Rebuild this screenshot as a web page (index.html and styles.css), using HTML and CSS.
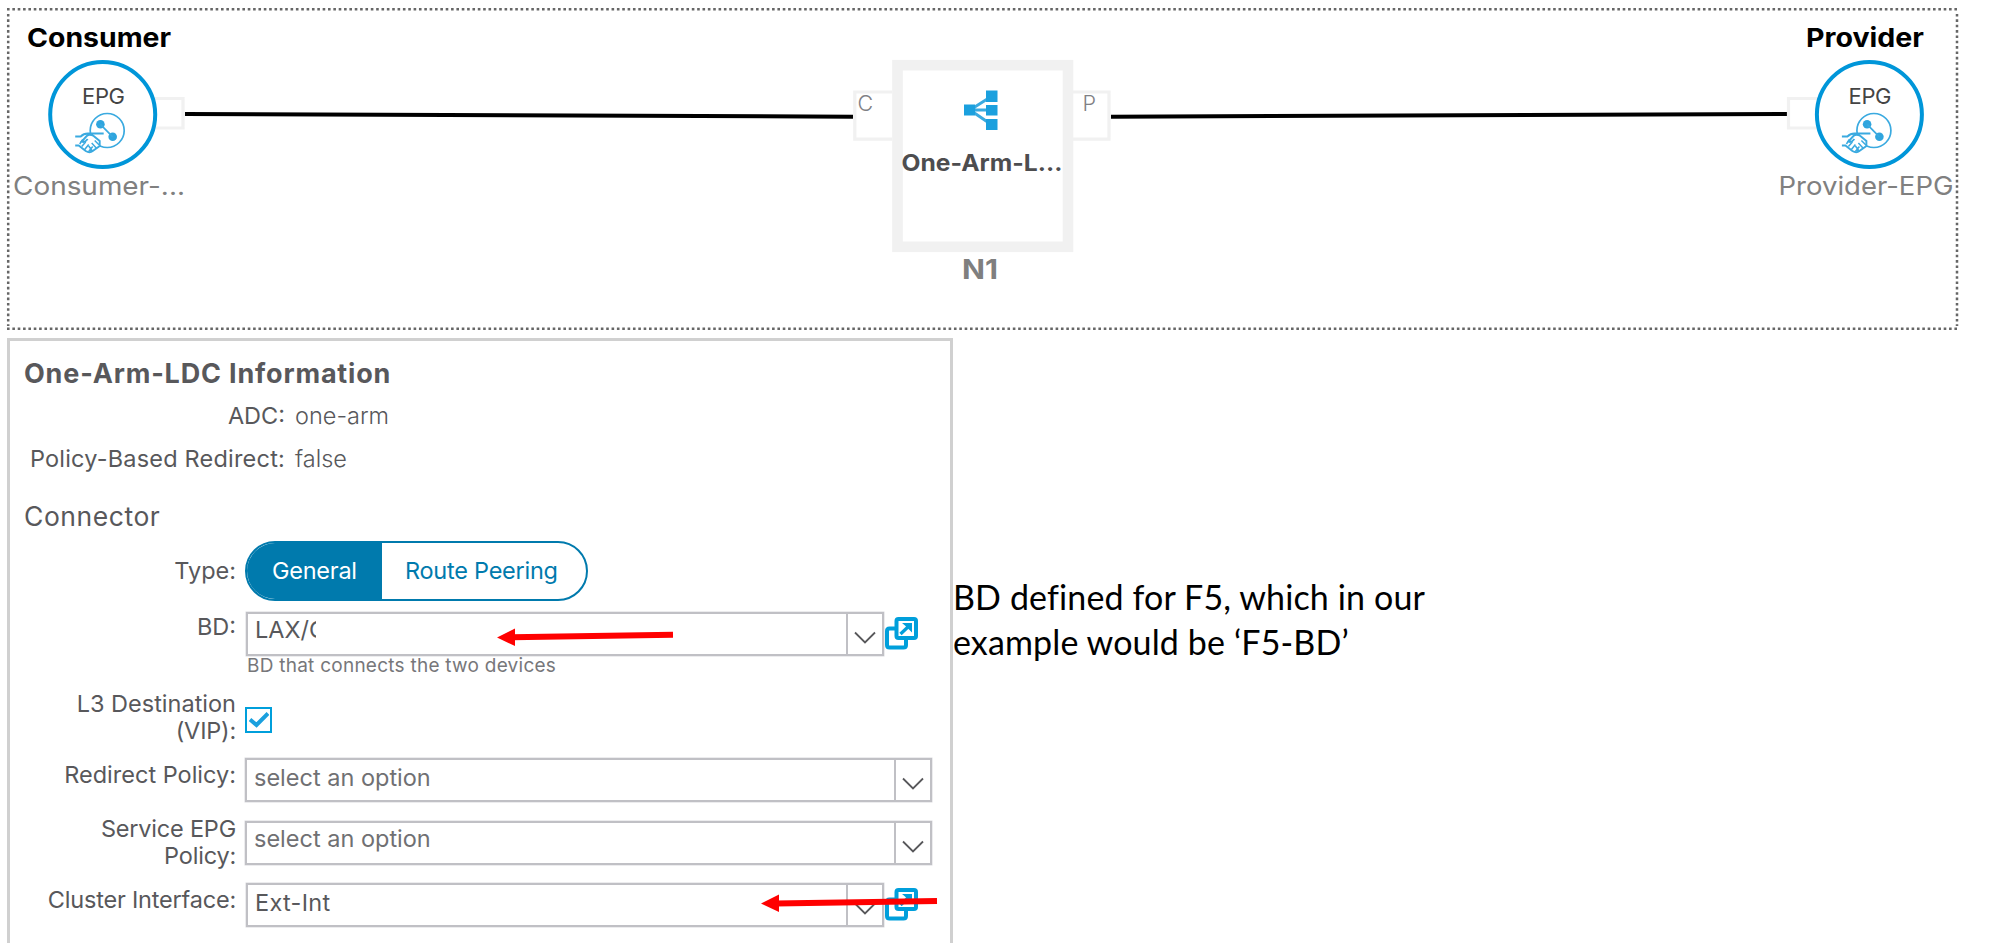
FILE: index.html
```html
<!DOCTYPE html>
<html lang="en">
<head>
<meta charset="utf-8">
<title>Service Graph</title>
<link rel="stylesheet" href="styles.css">
</head>
<body>
<svg class="graph" width="2000" height="338" viewBox="0 0 2000 338">
  <defs>
    <g id="epg">
      <circle class="ring" r="52.5"/>
      <g class="glyph">
        <circle class="thin" cx="4.5" cy="16" r="17"/>
        <circle class="solid" cx="-2.3" cy="9.8" r="4.3"/>
        <circle class="solid" cx="10" cy="22.3" r="4.3"/>
        <path class="thin" d="M-2.3 9.8 10 22.3"/>
        <path class="palm" d="M-22 23-24 30-14 38-3 33V26L-8 20z"/>
        <path class="hand" d="M-27.500 22h5.500q3-3 7-3H1M-27.500 31h3.500l7 5.500q4 2.500 7 0l7-5 0-5-6-5q-4-2.500-7 0l-5 5.500q3 1.500 6-2.500"/>
        <path class="hand-lines" d="M-20 25l-3 4.500M-18 35l4-5M-14 37l4-5M-10 37l-4-5.500M-6 34l-5-5.500M-3 31l-5-5M-21 32l4-4.500"/>
      </g>
    </g>
  </defs>
  <path class="dots" d="M7 9.2H1958M7 328.7H1958M8.2 14V326M1957 14V326"/>
  <path class="wire" d="M185 114 853 116.7M1111 116.7 1787 114"/>
  <path class="port" d="M150 98.5h33v29.5h-33M1821 98.5h-32.5v29.5H1821"/>
  <use href="#epg" x="102.7" y="114.5"/>
  <use href="#epg" x="1869.4" y="114.5"/>
  <text class="title" x="27" y="46.5" textLength="144" lengthAdjust="spacingAndGlyphs">Consumer</text>
  <text class="title" x="1806" y="46.5" textLength="118" lengthAdjust="spacingAndGlyphs">Provider</text>
  <text class="epg" x="82" y="104" textLength="43">EPG</text>
  <text class="epg" x="1848.5" y="104" textLength="43">EPG</text>
  <text class="name" x="13" y="195" textLength="172" lengthAdjust="spacingAndGlyphs">Consumer-...</text>
  <text class="name" x="1778.500" y="195" textLength="175" lengthAdjust="spacingAndGlyphs">Provider-EPG</text>
  <path class="port wide" d="M892 92h-37.2v47.2H892M1073 92h36v47.2h-36"/>
  <rect class="node" x="897.5" y="65.2" width="170.5" height="181.6"/>
  <path class="lb-line" d="M992 96 970 110 992 125M970 110h22"/>
  <path class="lb" d="M964 104.5h11v11h-11zM986 90.5h11.5v11.5H986zM986 105h11.5v10.5H986zM986 119h11.5v11H986z"/>
  <text class="port-name" x="857.500" y="111">C</text>
  <text class="port-name" x="1082.500" y="111">P</text>
  <text class="node-name" x="901.5" y="171" textLength="161" lengthAdjust="spacingAndGlyphs">One-Arm-L...</text>
  <text class="node-id" x="962" y="279" textLength="36" lengthAdjust="spacingAndGlyphs">N1</text>
</svg>

<div class="lower">
  <section class="panel">
    <h2 class="heading">One-Arm-LDC Information</h2>
    <div class="row info"><span class="label">ADC:</span><span class="text">one-arm</span></div>
    <div class="row info second"><span class="label loose">Policy-Based Redirect:</span><span class="text">false</span></div>
    <h3 class="subheading">Connector</h3>
    <div class="row type">
      <span class="label">Type:</span>
      <div class="toggle"><div class="on">General</div><div class="off">Route Peering</div></div>
    </div>
    <div class="row bd">
      <span class="label">BD:</span>
      <div class="control">
        <div class="line">
          <div class="select narrow"><div class="value"><span class="cut">LAX/C</span></div><div class="drop"><svg width="22" height="14"><path d="M1 1.5 11 11.5 21 1.5"/></svg></div></div>
          <svg class="open" width="33" height="33" viewBox="0 0 33 33"><path class="o-frame" d="M10 11.500H4.500Q2 11.500 2 14v14q0 2.500 2.500 2.500h14q2.500 0 2.500-2.500v-6"/><rect class="o-frame" x="11.500" y="2" width="19.500" height="19" rx="2"/><path class="o-arrow" d="M15.500 17 24 9"/><path class="o-head" d="M17 6H27v9.500L24.500 13 20 8.500z"/></svg>
        </div>
        <div class="hint">BD that connects the two devices</div>
      </div>
    </div>
    <div class="row vip">
      <span class="label">L3 Destination<br><span class="tight">(VIP):</span></span>
      <div class="check"><svg width="20" height="16"><path d="M1 7.500 7.500 13 19 1.500"/></svg></div>
    </div>
    <div class="row redirect">
      <span class="label">Redirect Policy:</span>
      <div class="select"><div class="value hollow">select an option</div><div class="drop"><svg width="22" height="14"><path d="M1 1.500 11 11.500 21 1.500"/></svg></div></div>
    </div>
    <div class="row service">
      <span class="label tight">Service EPG<br>Policy:</span>
      <div class="select"><div class="value hollow">select an option</div><div class="drop"><svg width="22" height="14"><path d="M1 1.500 11 11.500 21 1.500"/></svg></div></div>
    </div>
    <div class="row cluster">
      <span class="label tight">Cluster Interface:</span>
      <div class="line">
        <div class="select narrow"><div class="value ext">Ext-Int</div><div class="drop"><svg width="22" height="14"><path d="M1 1.500 11 11.500 21 1.500"/></svg></div></div>
        <svg class="open" width="33" height="33" viewBox="0 0 33 33"><path class="o-frame" d="M10 11.500H4.500Q2 11.500 2 14v14q0 2.500 2.500 2.500h14q2.500 0 2.500-2.500v-6"/><rect class="o-frame" x="11.500" y="2" width="19.500" height="19" rx="2"/><path class="o-arrow" d="M15.500 17 24 9"/><path class="o-head" d="M17 6H27v9.500L24.500 13 20 8.500z"/></svg>
      </div>
    </div>
  </section>
  <p class="note">BD defined for F5, which in our<br>example would be ‘F5-BD’</p>
</div>
<svg class="arrows" width="2000" height="943">
  <path class="shaft" d="M512 637.200 673 634.800M776 903.400 937 901"/>
  <path class="tip" d="M497 637.500 515 628.500V646zM761 903.500 779 894.500V912z"/>
</svg>
</body>
</html>
```
FILE: styles.css
```css
* { box-sizing: border-box; }
body {
  margin: 0;
  width: 2000px;
  height: 943px;
  overflow: hidden;
  position: relative;
  background: #fff;
  color: #58585b;
  font-family: Inter, "Liberation Sans", sans-serif;
  font-size: 23.5px;
  line-height: 27px;
}
svg { display: block; flex: none; fill: none; }

.dots { stroke: #666; stroke-width: 2.5; stroke-dasharray: 2.6 2.75; }
.wire { stroke: #000; stroke-width: 4; }
.port { stroke: #f1f1f1; stroke-width: 3.2; fill: #fff; }
.ring { stroke: #0096d9; stroke-width: 4; fill: #fff; }
.glyph { stroke: #3aaae0; }
.thin { stroke-width: 1.7; }
.solid { fill: #2fa5de; stroke: none; }
.palm { fill: #fff; stroke: none; }
.hand { stroke-width: 1.9; }
.hand-lines { stroke-width: 1.5; }
.node { stroke: #f1f1f1; stroke-width: 10.6; fill: #fff; }
.lb { fill: #1ba0de; }
.lb-line { stroke: #3aaae0; stroke-width: 3; }
.title { font-size: 26px; font-weight: 700; fill: #000; }
.epg { font-size: 22px; fill: #444; }
.name { font-size: 25.5px; fill: #808080; }
.port-name { font-size: 21.5px; font-weight: 300; fill: #808085; }
.node-name { font-size: 23px; font-weight: 700; fill: #4d4d4f; }
.node-id { font-size: 26.5px; font-weight: 700; fill: #7f7f7f; }

.lower { display: flex; align-items: flex-start; }
.panel {
  width: 946px;
  height: 620px;
  margin-left: 7px;
  flex: none;
  border: 3px solid #d0d0d0;
  padding: 18px 0 0 14px;
}
.heading, .subheading { margin: 0; font-size: 26.5px; line-height: 30px; }
.heading { height: 43px; font-size: 27px; font-weight: 700; letter-spacing: 0.82px; }
.subheading { height: 40px; font-weight: 400; letter-spacing: 0.55px; }
.row { display: grid; grid-template-columns: 212px 1fr; column-gap: 9px; align-items: start; white-space: nowrap; }
.label { text-align: right; }
.loose { letter-spacing: 0.2px; }
.tight { letter-spacing: -0.2px; }
.info { height: 42.5px; }
.info .text { font-weight: 300; padding-left: 50px; }
.info .label { margin-right: -49px; }
.info.second { height: 56.5px; }
.type { height: 71px; }
.type .label { padding-top: 16px; }
.toggle { display: flex; width: 343px; height: 60px; border: 2.5px solid #007aad; border-radius: 30px; overflow: hidden; color: #007aad; line-height: 56px; letter-spacing: -0.25px; }
.on { width: 135px; padding-left: 25px; background: #007aad; color: #fff; }
.off { padding-left: 23px; }
.bd { height: 78px; }
.bd .label { padding-top: 1px; }
.line { display: flex; gap: 1px; margin-left: 1px; }
.select { width: 687px; height: 44px; display: flex; border: 2px solid #c0c0c5; box-shadow: 0 0 0 0.5px #d8d8dc; }
.select.narrow { width: 638px; }
.value { flex: 1; padding: 4px 0 0 7px; }
.ext { letter-spacing: 0.3px; }
.hollow { color: #707073; }
.bd .value { padding-top: 2px; }
.cut { display: block; width: 61px; overflow: hidden; }
.drop { width: 36px; border-left: 2px solid #c0c0c5; padding: 17px 0 0 6px; }
.drop svg { stroke: #58585b; stroke-width: 1.8; }
.open { margin-top: 5px; }
.o-frame { stroke: #009fdb; stroke-width: 4; }
.o-arrow { stroke: #009fdb; stroke-width: 3.2; }
.o-head { fill: #009fdb; }
.hint { font-size: 19px; line-height: 20px; letter-spacing: 0.25px; color: #77777a; padding-left: 2px; }
.vip { height: 68px; }
.check { width: 27px; height: 26px; margin-top: 17px; border: 2px solid #009fdb; padding: 3px 0 0 2px; }
.check svg { stroke: #1ba0de; stroke-width: 4; }
.redirect { height: 57px; }
.redirect .label { padding-top: 3px; }
.service { height: 68px; }
.service .select { margin-top: 6px; }
.service .value { padding-top: 2px; }
.cluster .label { padding-top: 3px; }

.note { margin: 236px 0 0; font: 34px/45px Lato, sans-serif; letter-spacing: 0.13px; color: #000; white-space: nowrap; }
.arrows { position: absolute; left: 0; top: 0; pointer-events: none; }
.shaft { stroke: #f00; stroke-width: 6; }
.tip { fill: #f00; }
```
